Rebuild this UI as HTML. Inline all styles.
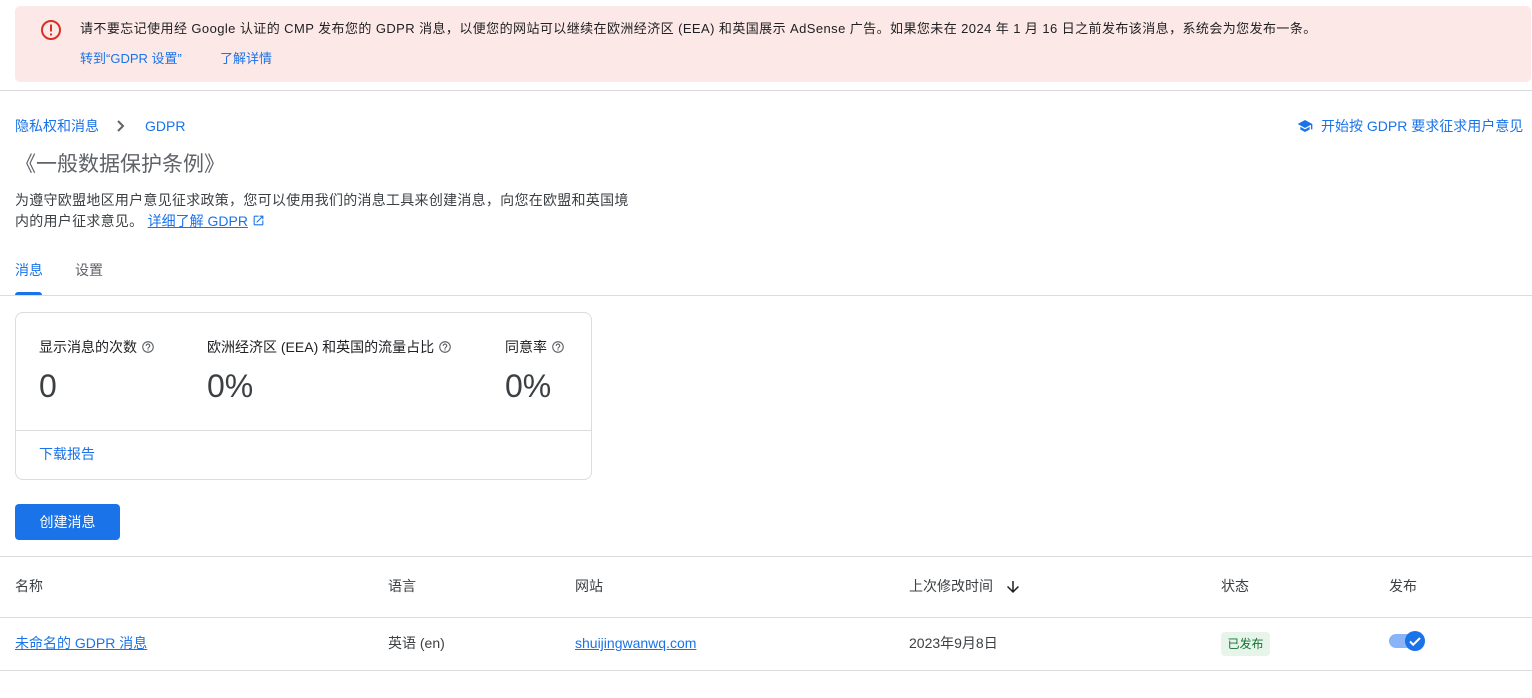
<!DOCTYPE html>
<html><head><meta charset="utf-8"><style>
*{margin:0;padding:0;box-sizing:border-box}
body{width:1532px;height:698px;background:#fff;font-family:"Liberation Sans","Noto Sans CJK SC",sans-serif;color:#3c4043;position:relative;overflow:hidden}
.a{position:absolute;white-space:nowrap;line-height:20px}
.blue{color:#1a73e8}
.q{display:inline-block;vertical-align:-2px;margin-left:4px}
</style></head><body>
<div class="a" style="left:15px;top:6px;width:1516px;height:76px;background:#fce8e6;border-radius:5px"></div>
<svg class="a" style="left:40px;top:19px" width="22" height="22" viewBox="0 0 22 22"><circle cx="11" cy="11" r="9" fill="none" stroke="#d93025" stroke-width="2"/><rect x="10" y="5.5" width="2" height="7" fill="#d93025"/><rect x="10" y="14.5" width="2" height="2" fill="#d93025"/></svg>
<div class="a" style="left:80px;top:19px;font-size:13px;color:#202124;letter-spacing:0.42px">请不要忘记使用经 Google 认证的 CMP 发布您的 GDPR 消息，以便您的网站可以继续在欧洲经济区 (EEA) 和英国展示 AdSense 广告。如果您未在 2024 年 1 月 16 日之前发布该消息，系统会为您发布一条。</div>
<div class="a blue" style="left:80px;top:49px;font-size:13px">转到“GDPR 设置”</div>
<div class="a blue" style="left:220px;top:49px;font-size:13px">了解详情</div>
<div class="a" style="left:0;top:90px;width:1532px;height:1px;background:#dadce0"></div>
<div class="a blue" style="left:15px;top:116px;font-size:14px">隐私权和消息</div>
<svg class="a" style="left:114px;top:118px" width="14" height="16" viewBox="0 0 14 16"><path d="M4 3l5 5-5 5" fill="none" stroke="#5f6368" stroke-width="2"/></svg>
<div class="a blue" style="left:145px;top:115px;font-size:14px;line-height:22px">GDPR</div>
<svg class="a" style="left:1296px;top:118px" width="18" height="16" viewBox="0 0 24 24"><path d="M12 3L1 9l11 6 9-4.9V17h2V9L12 3zM5 13.2v4L12 21l7-3.8v-4L12 17l-7-3.8z" fill="#1a73e8"/></svg>
<div class="a blue" style="left:1321px;top:116px;font-size:14px">开始按 GDPR 要求征求用户意见</div>
<div class="a" style="left:15px;top:152px;font-size:21px;line-height:26px;color:#5f6368">《一般数据保护条例》</div>
<div class="a" style="left:15px;top:190px;font-size:14px;line-height:21px;color:#3c4043;letter-spacing:0.27px">为遵守欧盟地区用户意见征求政策，您可以使用我们的消息工具来创建消息，向您在欧盟和英国境<br>内的用户征求意见。 <span class="blue" style="text-decoration:underline;letter-spacing:0">详细了解 GDPR</span> <svg width="13" height="13" viewBox="0 0 24 24" style="vertical-align:-1px"><path d="M19 19H5V5h7V3H5a2 2 0 00-2 2v14a2 2 0 002 2h14a2 2 0 002-2v-7h-2v7zM14 3v2h3.6l-9.8 9.8 1.4 1.4L19 6.4V10h2V3h-7z" fill="#1a73e8"/></svg></div>
<div class="a blue" style="left:15px;top:260px;font-size:14px">消息</div>
<div class="a" style="left:75px;top:260px;font-size:14px;color:#5f6368">设置</div>
<div class="a" style="left:15px;top:292px;width:27px;height:3px;background:#1a73e8;border-radius:3px 3px 0 0"></div>
<div class="a" style="left:0;top:295px;width:1532px;height:1px;background:#dadce0"></div>
<div class="a" style="left:15px;top:312px;width:577px;height:168px;border:1px solid #dadce0;border-radius:8px"></div>
<div class="a" style="left:16px;top:430px;width:575px;height:1px;background:#dadce0"></div>
<div class="a" style="left:39px;top:337px;font-size:14px;color:#202124">显示消息的次数<svg class="q" width="14" height="14" viewBox="0 0 24 24"><path d="M11 18h2v-2h-2v2zm1-16C6.48 2 2 6.48 2 12s4.48 10 10 10 10-4.48 10-10S17.52 2 12 2zm0 18c-4.41 0-8-3.59-8-8s3.59-8 8-8 8 3.59 8 8-3.59 8-8 8zm0-14c-2.21 0-4 1.79-4 4h2c0-1.1.9-2 2-2s2 .9 2 2c0 2-3 1.75-3 5h2c0-2.25 3-2.5 3-5 0-2.21-1.79-4-4-4z" fill="#5f6368"/></svg></div>
<div class="a" style="left:207px;top:337px;font-size:14px;color:#202124">欧洲经济区 (EEA) 和英国的流量占比<svg class="q" width="14" height="14" viewBox="0 0 24 24"><path d="M11 18h2v-2h-2v2zm1-16C6.48 2 2 6.48 2 12s4.48 10 10 10 10-4.48 10-10S17.52 2 12 2zm0 18c-4.41 0-8-3.59-8-8s3.59-8 8-8 8 3.59 8 8-3.59 8-8 8zm0-14c-2.21 0-4 1.79-4 4h2c0-1.1.9-2 2-2s2 .9 2 2c0 2-3 1.75-3 5h2c0-2.25 3-2.5 3-5 0-2.21-1.79-4-4-4z" fill="#5f6368"/></svg></div>
<div class="a" style="left:505px;top:337px;font-size:14px;color:#202124">同意率<svg class="q" width="14" height="14" viewBox="0 0 24 24"><path d="M11 18h2v-2h-2v2zm1-16C6.48 2 2 6.48 2 12s4.48 10 10 10 10-4.48 10-10S17.52 2 12 2zm0 18c-4.41 0-8-3.59-8-8s3.59-8 8-8 8 3.59 8 8-3.59 8-8 8zm0-14c-2.21 0-4 1.79-4 4h2c0-1.1.9-2 2-2s2 .9 2 2c0 2-3 1.75-3 5h2c0-2.25 3-2.5 3-5 0-2.21-1.79-4-4-4z" fill="#5f6368"/></svg></div>
<div class="a" style="left:39px;top:368px;font-size:32px;line-height:36px;color:#3c4043">0</div>
<div class="a" style="left:207px;top:368px;font-size:32px;line-height:36px;color:#3c4043">0%</div>
<div class="a" style="left:505px;top:368px;font-size:32px;line-height:36px;color:#3c4043">0%</div>
<div class="a blue" style="left:39px;top:444px;font-size:14px">下载报告</div>
<div class="a" style="left:15px;top:504px;width:105px;height:36px;background:#1a73e8;border-radius:4px;color:#fff;font-size:14px;text-align:center;line-height:36px">创建消息</div>
<div class="a" style="left:0;top:556px;width:1532px;height:1px;background:#dadce0"></div>
<div class="a" style="left:0;top:617px;width:1532px;height:1px;background:#dadce0"></div>
<div class="a" style="left:0;top:670px;width:1532px;height:1px;background:#dadce0"></div>
<div class="a" style="left:15px;top:576px;font-size:14px">名称</div>
<div class="a" style="left:388px;top:576px;font-size:14px">语言</div>
<div class="a" style="left:575px;top:576px;font-size:14px">网站</div>
<div class="a" style="left:909px;top:576px;font-size:14px">上次修改时间</div>
<svg class="a" style="left:1004px;top:578px" width="18" height="18" viewBox="0 0 24 24"><path d="M20 12l-1.4-1.4-5.6 5.6V4h-2v12.2l-5.6-5.6L4 12l8 8 8-8z" fill="#202124"/></svg>
<div class="a" style="left:1221px;top:576px;font-size:14px">状态</div>
<div class="a" style="left:1389px;top:576px;font-size:14px">发布</div>
<div class="a blue" style="left:15px;top:633px;font-size:14px;text-decoration:underline">未命名的 GDPR 消息</div>
<div class="a" style="left:388px;top:633px;font-size:14px">英语 (en)</div>
<div class="a blue" style="left:575px;top:634px;font-size:14px;line-height:18px;text-decoration:underline">shuijingwanwq.com</div>
<div class="a" style="left:909px;top:633px;font-size:14px">2023年9月8日</div>
<div class="a" style="left:1221px;top:632px;width:49px;height:24px;background:#e6f4ea;border-radius:4px;color:#137333;font-size:12px;text-align:center;line-height:24px">已发布</div>
<div class="a" style="left:1389px;top:634px;width:30px;height:14px;background:#8ab4f8;border-radius:7px"></div>
<svg class="a" style="left:1404px;top:630px" width="22" height="22" viewBox="0 0 22 22"><circle cx="11" cy="11" r="10" fill="#1a73e8"/><path d="M6 11.5l3.2 3.2L16 8" fill="none" stroke="#fff" stroke-width="2"/></svg>
</body></html>
